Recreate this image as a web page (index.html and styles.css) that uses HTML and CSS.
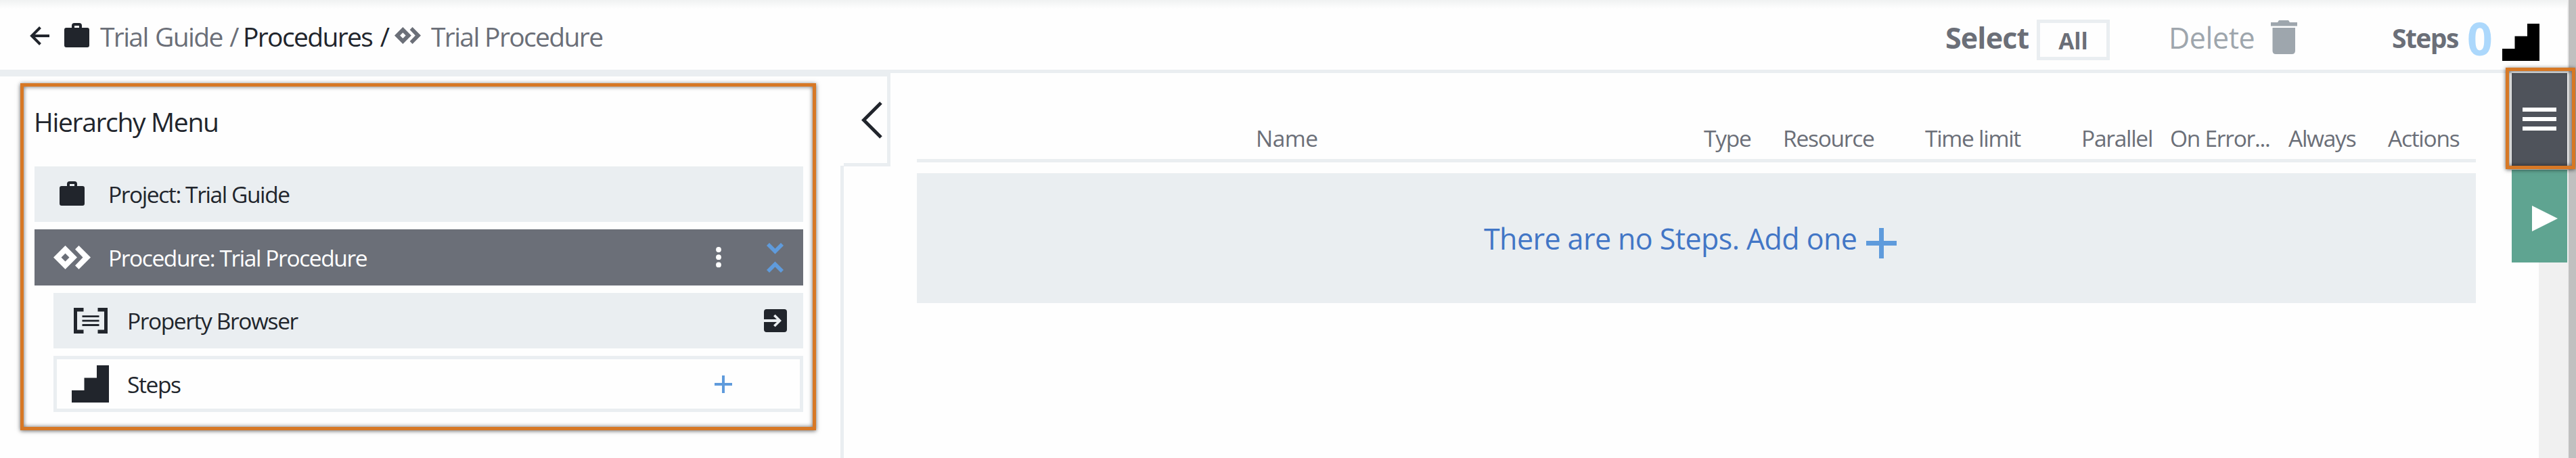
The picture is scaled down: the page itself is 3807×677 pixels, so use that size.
FILE: index.html
```html
<!DOCTYPE html>
<html lang="en">
<head>
<meta charset="utf-8">
<title>Trial Procedure</title>
<link rel="stylesheet" href="styles.css">
</head>
<body>
<svg class="defs" width="0" height="0">
  <symbol id="case" viewBox="0 0 37 36" preserveAspectRatio="none"><path fill-rule="evenodd" d="M3 7H11V4Q11 0 15 0H22Q26 0 26 4V7H34Q37 7 37 10V33Q37 36 34 36H3Q0 36 0 33V10Q0 7 3 7ZM15 7H22V4H15Z"/></symbol>
  <symbol id="proc" viewBox="0 0 55 35" preserveAspectRatio="none"><path fill-rule="evenodd" d="M17.500 0L35 17.500L17.500 35L0 17.500ZM17.500 11.500L11.500 17.500L17.500 23.500L23.500 17.500ZM37.500 0L55 17.500L37.500 35L32 29.500L43.500 17.500L32 5.500Z"/></symbol>
  <symbol id="stairs" viewBox="0 0 55 55"><path d="M0 55V37H18.500V18.500H37V0H55V55Z"/></symbol>
</svg>
<div class="app">
  <div class="page">
    <header class="topbar">
      <nav class="crumbs">
        <svg class="back" width="30" height="28" viewBox="0 0 30 28"><path d="M29 14H3M15.500 1.500L3 14L15.500 26.500" fill="none" stroke="currentColor" stroke-width="4"/></svg>
        <svg class="crumb-case" width="37" height="36"><use href="#case"/></svg>
        <span class="t crumb-a muted">Trial Guide /</span>
        <span class="t crumb-b">Procedures /</span>
        <svg class="crumb-proc muted" width="39" height="25"><use href="#proc"/></svg>
        <span class="t crumb-c muted">Trial Procedure</span>
      </nav>
      <div class="tools">
        <span class="t select">Select</span>
        <span class="all"><span class="t">All</span></span>
        <span class="t delete">Delete</span>
        <svg class="trash" width="39" height="50" viewBox="0 0 39 50"><path d="M0 3H10L12 0H26L28 3H39V8.500H0ZM2.500 11H36V45Q36 50 31 50H7.500Q2.500 50 2.500 45Z"/></svg>
        <span class="t steps-label">Steps</span>
        <span class="t count">0</span>
        <svg class="steps-icon" width="55" height="55"><use href="#stairs"/></svg>
      </div>
    </header>
    <div class="body">
      <aside class="sidebar">
        <section class="menu">
          <h2 class="t menu-title">Hierarchy Menu</h2>
          <div class="row r1">
            <svg class="i-case" width="37" height="36"><use href="#case"/></svg>
            <span class="t l1">Project: Trial Guide</span>
          </div>
          <div class="row r2">
            <svg class="i-proc" width="55" height="35"><use href="#proc"/></svg>
            <span class="t l2">Procedure: Trial Procedure</span>
            <svg class="end dots" width="8" height="31" viewBox="0 0 8 31"><circle cx="4" cy="4" r="3.900"/><circle cx="4" cy="15.200" r="3.900"/><circle cx="4" cy="26.400" r="3.900"/></svg>
            <svg class="collapse" width="25" height="44" viewBox="0 0 25 44"><path d="M0 4L4 0L12.500 8.500L21 0L25 4L12.500 16.500ZM0 40L4 44L12.500 35.500L21 44L25 40L12.500 27.500Z"/></svg>
          </div>
          <div class="row r3 child">
            <svg class="i-prop" width="50" height="38" viewBox="0 0 50 38"><path d="M0 0H14.500V5.500H5V32.500H14.500V38H0ZM50 0H35.500V5.500H45V32.500H35.500V38H50ZM12.500 11.300H37.500V14H12.500ZM12.500 17.700H37.500V20.500H12.500ZM12.500 24H37.500V27H12.500Z"/></svg>
            <span class="t l3">Property Browser</span>
            <svg class="end enter" width="34" height="34" viewBox="0 0 34 34"><path d="M4 0H30Q34 0 34 4V30Q34 34 30 34H4Q0 34 0 30V19H19L14 23.700L16.700 26.300L26 17L16.700 7.700L14 10.300L19 15H0V4Q0 0 4 0Z"/></svg>
          </div>
          <div class="row r4 child">
            <svg class="i-stairs" width="55" height="55"><use href="#stairs"/></svg>
            <span class="t l4">Steps</span>
            <svg class="end plus" width="26" height="26" viewBox="0 0 26 26"><path d="M11 0H15V11H26V15H15V26H11V15H0V11H11Z"/></svg>
          </div>
        </section>
        <div class="toggle"><svg width="31" height="55" viewBox="0 0 31 55"><path d="M29 2L3.500 27.500L29 53" fill="none" stroke="currentColor" stroke-width="5"/></svg></div>
      </aside>
      <main class="main">
        <div class="thead">
          <span class="t c-name">Name</span><span class="t c-type">Type</span><span class="t c-res">Resource</span><span class="t c-time">Time limit</span><span class="t c-par">Parallel</span><span class="t c-err">On Error...</span><span class="t c-alw">Always</span><span class="t c-act">Actions</span>
        </div>
        <div class="empty">
          <span class="t">There are no Steps. Add one</span>
          <svg class="plus" width="45" height="45" viewBox="0 0 45 45"><path d="M19 0H26V19H45V26H26V45H19V26H0V19H19Z"/></svg>
        </div>
      </main>
      <div class="rail">
        <div class="btn burger"><svg width="50" height="34" viewBox="0 0 50 34"><path d="M0 0H50V6H0ZM0 14H50V20H0ZM0 28H50V34H0Z"/></svg></div>
        <div class="btn play"><svg width="38" height="38" viewBox="0 0 38 38"><path d="M0 0L38 19L0 38Z"/></svg></div>
      </div>
    </div>
  </div>
  <div class="scroll"></div>
  <div class="mark mark-menu"></div>
  <div class="mark mark-burger"></div>
</div>
</body>
</html>
```
FILE: styles.css
```css
* { box-sizing: border-box; }
body { margin: 0; background: #fefefe; color: #21252c; font-family: "Open Sans", "Noto Sans", sans-serif; }
svg { display: block; flex: none; fill: currentColor; }
.defs { position: absolute; }
.t { display: block; flex: none; white-space: nowrap; line-height: 60px; font-weight: 400; }
.muted { color: #6b6f78; }
.app { position: relative; display: flex; width: 3807px; height: 677px; overflow: hidden; }
.page { width: 3794px; height: 677px; display: flex; flex-direction: column; }
.scroll { width: 13px; background: #c0c0c0; border-left: 2px solid #efefef; }

.topbar { height: 108px; flex: none; border-bottom: 5px solid #eaeef1; display: flex; justify-content: space-between; background: linear-gradient(#f0f2f2, #fefefe 13px); }
.crumbs, .tools { display: flex; align-items: flex-start; }
.crumbs .t { margin-top: 24px; font-size: 39px; height: 60px; letter-spacing: -0.042em; }
.back { margin: 39px 0 0 44px; }
.crumb-case { margin: 34px 0 0 21px; }
.crumbs .crumb-a { margin-left: 16px; width: 211px; word-spacing: 2px; }
.crumbs .crumb-b { width: 224px; word-spacing: 3px; }
.crumb-proc { margin-top: 40px; }
.crumbs .crumb-c { margin-left: 15px; }

.tools { width: 919px; }
.tools .t { font-weight: 700; color: #6b6f78; }
.tools .select { font-size: 43px; margin-top: 26px; width: 135px; letter-spacing: -0.02em; }
.all { width: 108px; height: 60px; margin-top: 29px; border: 5px solid #eaeef1; display: flex; justify-content: center; }
.all .t { font-size: 33.500px; margin-top: -4px; }
.tools .delete { font-size: 43px; font-weight: 400; color: #9ea6ad; margin: 26px 0 0 87px; width: 151px; letter-spacing: -0.01em; }
.trash { margin-top: 30px; color: #9ea6ad; }
.tools .steps-label { font-size: 39px; margin: 26px 0 0 140px; width: 111px; letter-spacing: -0.04em; }
.tools .count { font-size: 66px; color: #acd8fc; margin-top: 26px; width: 52px; }
.steps-icon { margin-top: 35px; color: #000; }

.body { flex: 1; display: flex; }
.sidebar { width: 1316px; display: flex; flex: none; border-top: 5px solid #eaeef1; }
.menu { width: 1247px; padding: 15px 55px 0 51px; border-style: solid; border-width: 0 5px 0 0; border-image: linear-gradient(transparent 133px, #eaeef1 133px) 1; }
.menu-title { margin: 22px 0 36px -1px; font-size: 39px; letter-spacing: -0.034em; }
.toggle { width: 69px; height: 133px; border: solid #eaeef1; border-width: 0 5px 5px 0; padding: 37px 0 0 26px; }
.row { height: 82px; margin-bottom: 11px; background: #eaeef1; display: flex; align-items: center; }
.row .t { font-size: 33.500px; letter-spacing: -0.042em; }
.r2 { height: 83px; background: #6b6f78; color: #fff; }
.child { margin-left: 28px; }
.r4 { height: 83px; background: #fefefe; border: 5px solid #eaeef1; }
.i-case { margin: 0 35px 2px 37px; }
.i-proc { margin: 0 26px 0 28px; }
.i-prop { margin: 0 29px 0 30px; }
.i-stairs { margin: 0 27px 0 22px; }
.end { margin-left: auto; }
.dots { margin-right: 67px; }
.collapse { margin-right: 29px; color: #5f9bdc; }
.enter { margin-right: 24px; }
.plus { color: #5f9bdc; }
.row .plus { margin-right: 100px; }

.main { margin-left: 39px; width: 2304px; flex: none; }
.thead { height: 132px; border-bottom: 5px solid #eaeef1; padding-top: 66px; display: flex; color: #6b6f78; }
.thead .t { font-size: 33.500px; letter-spacing: -0.038em; }
.thead .c-name { margin-left: 501px; width: 662px; letter-spacing: -0.015em; }
.c-type { width: 117px; }
.c-res { width: 210px; }
.c-time { width: 231px; }
.c-par { width: 131px; }
.c-err { width: 175px; }
.c-alw { width: 147px; }
.empty { margin-top: 16px; height: 192px; background: #eaeef1; color: #4276c6; display: flex; padding-left: 838px; }
.empty .t { font-size: 43px; margin-top: 67px; width: 565px; letter-spacing: -0.0135em; }
.empty .plus { margin-top: 81px; }

.rail { margin-left: 53px; width: 82px; background: linear-gradient(90deg, transparent 40px, #f0f0f0 40px); }
.btn { height: 137px; background: #4f535b; color: #fff; margin-bottom: 6px; padding: 51px 0 0 16px; }
.play { background: #5fa491; padding: 53px 0 0 30px; }

.mark { position: absolute; border: 5px solid #d77825; box-shadow: 0 1px 6px rgba(0,0,0,.6), inset 0 0 6px rgba(0,0,0,.6); }
.mark-menu { left: 30px; top: 123px; width: 1176px; height: 513px; }
.mark-burger { left: 3703px; top: 100px; width: 103px; height: 150px; }
```
